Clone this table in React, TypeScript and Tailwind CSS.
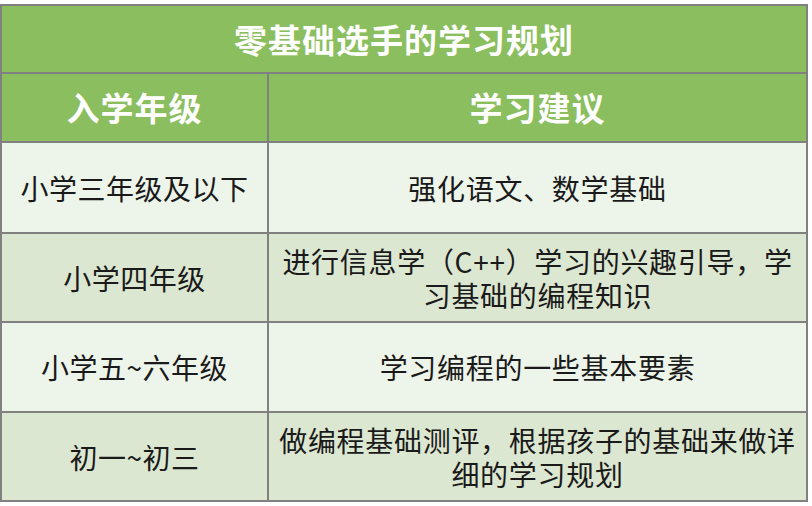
import React from "react";

const font = { fontFamily: '"Noto Sans CJK SC", "Noto Sans", sans-serif' };

type Row = { grade: string; advice: string[]; light: boolean; h: string };

export default function App() {
  const rows: Row[] = [
    { grade: "小学三年级及以下", advice: ["强化语文、数学基础"], light: true, h: "h-[89px]" },
    {
      grade: "小学四年级",
      advice: ["进行信息学（C++）学习的兴趣引导，学", "习基础的编程知识"],
      light: false,
      h: "h-[87px]",
    },
    { grade: "小学五~六年级", advice: ["学习编程的一些基本要素"], light: true, h: "h-[88px]" },
    {
      grade: "初一~初三",
      advice: ["做编程基础测评，根据孩子的基础来做详", "细的学习规划"],
      light: false,
      h: "h-[87px]",
    },
  ];

  return (
    <div className="w-[812px] h-[506px] bg-white pt-[4px]" style={font}>
      <div className="w-[808px] grid grid-cols-[265px_537px] gap-[2px] p-[2px] bg-[#808080]">
        <div className="col-span-2 h-[66px] bg-[#8BBE5E] flex items-center justify-center text-white font-bold text-[33px] leading-none tracking-[1px]">
          零基础选手的学习规划
        </div>
        <div className="h-[67px] bg-[#8BBE5E] flex items-center justify-center text-white font-bold text-[33px] leading-none tracking-[1px]">
          入学年级
        </div>
        <div className="h-[67px] bg-[#8BBE5E] flex items-center justify-center text-white font-bold text-[33px] leading-none tracking-[1px]">
          学习建议
        </div>
        {rows.map((r, i) => (
          <React.Fragment key={i}>
            <div
              className={`${r.h} ${r.light ? "bg-[#EDF4E9]" : "bg-[#DCE7D1]"} flex items-center justify-center text-[#1a1a1a] text-[28px] leading-[34px] tracking-[0.5px]`}
            >
              {r.grade}
            </div>
            <div
              className={`${r.h} ${r.light ? "bg-[#EDF4E9]" : "bg-[#DCE7D1]"} flex flex-col items-center justify-center text-center text-[#1a1a1a] text-[28px] leading-[34px] tracking-[0.7px]`}
            >
              {r.advice.map((line, j) => (
                <div key={j} className="whitespace-nowrap">
                  {line}
                </div>
              ))}
            </div>
          </React.Fragment>
        ))}
      </div>
    </div>
  );
}
